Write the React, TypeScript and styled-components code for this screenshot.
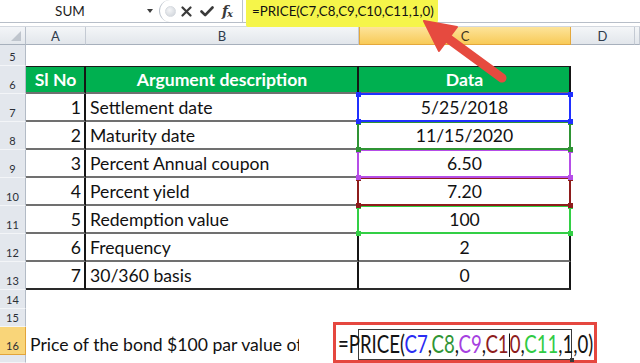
import React from 'react'
import styled, { createGlobalStyle } from 'styled-components'

const GlobalStyle = createGlobalStyle`
  html, body {
    margin: 0;
    padding: 0;
    background: #fff;
  }
  body {
    font-family: Lato, "Open Sans", sans-serif;
  }
`

const Page = styled.div`
  position: relative;
  width: 640px;
  height: 363px;
  overflow: hidden;
  background: #fff;
`

// formula bar
const FormulaBar = styled.div`
  display: flex;
  align-items: stretch;
  height: 22px;
  border-bottom: 1px solid #b7bec8;
  background: #fff;
`

const NameBox = styled.div`
  width: 140px;
  display: flex;
  align-items: center;
  justify-content: center;
  font-size: 13.5px;
  color: #1d1d1d;
`

const DropZone = styled.div`
  width: 19px;
  display: flex;
  align-items: center;
  justify-content: center;
  &::after {
    content: '';
    border-left: 3.5px solid transparent;
    border-right: 3.5px solid transparent;
    border-top: 4px solid #3d3d3d;
  }
`

const ButtonStrip = styled.div`
  width: 84px;
  display: flex;
  align-items: center;
  border-left: 1px solid #bcc3cc;
  border-right: 1px solid #bcc3cc;
  border-radius: 11px 0 0 11px;
  box-sizing: border-box;
`

const Grip = styled.span`
  width: 9px;
  height: 9px;
  margin-left: 5px;
  border-radius: 50%;
  background: radial-gradient(circle at 40% 35%, #f4f5f7, #cdd2d8);
  border: 1px solid #d6dae0;
`

const IconSlot = styled.span<{ $w: number }>`
  width: ${({ $w }) => $w}px;
  display: flex;
  align-items: center;
  justify-content: center;
  color: #3a3a3a;
`

const FxLabel = styled.span`
  font-family: "DejaVu Serif", "Liberation Serif", serif;
  font-style: italic;
  font-weight: bold;
  font-size: 14px;
  color: #3a3a3a;
  letter-spacing: -1px;
  sub {
    font-size: 10px;
    vertical-align: -1px;
  }
`

const FormulaInput = styled.div`
  flex: 1;
  display: flex;
  align-items: flex-start;
  padding-left: 3px;
`

const Highlight = styled.span`
  position: relative;
  z-index: 3;
  height: 27px;
  box-sizing: border-box;
  padding: 3px 4px 0 6px;
  background: #f5f54a;
  border-radius: 0 0 7px 2px;
  font-size: 13.3px;
  line-height: 16px;
  color: #111;
`

const Band = styled.div`
  height: 3px;
  border-bottom: 1px solid #d3d8df;
  background: #fff;
`

// sheet
const Sheet = styled.div`
  display: grid;
  grid-template-columns: 26px 60px 273px 212px 64px 5px;
  grid-template-rows: 18px 21px repeat(8, 28px) 19px 18px 28px 8px;
`

const Corner = styled.div`
  position: relative;
  background: linear-gradient(#f3f5f8, #e3e7ec);
  border-right: 1px solid #b7bfca;
  border-bottom: 1px solid #a7b0bc;
  &::after {
    content: '';
    position: absolute;
    right: 4px;
    bottom: 3px;
    border-left: 10px solid transparent;
    border-bottom: 10px solid #bfc5cd;
  }
`

const ColHead = styled.div<{ $selected?: boolean }>`
  display: flex;
  align-items: center;
  justify-content: center;
  font-size: 13px;
  color: ${({ $selected }) => ($selected ? '#3b3320' : '#2f3b4c')};
  background: ${({ $selected }) =>
    $selected ? 'linear-gradient(#fde49a, #f8ca58)' : 'linear-gradient(#f4f6f8, #e2e6eb)'};
  border-right: 1px solid ${({ $selected }) => ($selected ? '#e4a83c' : '#c4cad3')};
  border-left: ${({ $selected }) => ($selected ? '1px solid #e4a83c' : 'none')};
  border-bottom: 1px solid ${({ $selected }) => ($selected ? '#e4a83c' : '#a7b0bc')};
`

const RowHead = styled.div<{ $selected?: boolean }>`
  display: flex;
  align-items: flex-end;
  justify-content: center;
  padding-bottom: 3px;
  box-sizing: border-box;
  font-size: 11px;
  line-height: 1;
  color: #2b2f36;
  background: ${({ $selected }) => ($selected ? '#f9d579' : '#e3e7ed')};
  border-right: 1px solid ${({ $selected }) => ($selected ? '#e2a43a' : '#b3bbc6')};
  border-bottom: 1px solid ${({ $selected }) => ($selected ? '#e2a43a' : '#f3f5f8')};
`

const Blank = styled.div`
  background: #fff;
`

const Cell = styled.div<{ $align: 'left' | 'right' | 'center'; $head?: boolean; $last?: boolean }>`
  position: relative;
  display: flex;
  align-items: flex-end;
  justify-content: ${({ $align }) =>
    $align === 'left' ? 'flex-start' : $align === 'right' ? 'flex-end' : 'center'};
  padding: 0 3px 3px 4px;
  box-sizing: border-box;
  font-size: 17.6px;
  line-height: 1;
  white-space: nowrap;
  color: ${({ $head }) => ($head ? '#fff' : '#111')};
  font-weight: ${({ $head }) => ($head ? 700 : 400)};
  background: ${({ $head }) => ($head ? '#00b050' : '#fff')};
  border-top: ${({ $head }) => ($head ? '1px solid #1a1a1a' : 'none')};
  border-right: 2px solid #151515;
  border-bottom: 2px solid ${({ $last }) => ($last ? '#2a2a2a' : '#707070')};
`

const RefFrame = styled.span<{ $color: string; $z: number }>`
  position: absolute;
  top: -1px;
  left: -2px;
  right: -2px;
  bottom: -2px;
  border: 2px solid ${({ $color }) => $color};
  z-index: ${({ $z }) => $z};
  pointer-events: none;
`

const Handle = styled.span<{ $color: string; $v: 'top' | 'bottom'; $h: 'left' | 'right' }>`
  position: absolute;
  width: 5px;
  height: 5px;
  background: ${({ $color }) => $color};
  ${({ $v }) => ($v === 'top' ? 'top: -3.5px;' : 'bottom: -3.5px;')}
  ${({ $h }) => ($h === 'left' ? 'left: -3.5px;' : 'right: -3.5px;')}
`

const NoteCell = styled.div`
  grid-column: 2 / 4;
  display: flex;
  align-items: flex-end;
  padding: 0 0 1px 4px;
  overflow: hidden;
`

const NoteText = styled.span`
  display: block;
  max-width: 269px;
  overflow: hidden;
  white-space: nowrap;
  font-size: 17.6px;
  line-height: 1;
  color: #111;
`

// annotations laid over the sheet
const Arrow = styled.svg`
  position: absolute;
  left: 0;
  top: 0;
  z-index: 20;
  pointer-events: none;
`

const Callout = styled.div`
  position: absolute;
  left: 333px;
  top: 322px;
  width: 264px;
  height: 41px;
  box-sizing: border-box;
  border: 3px solid #e5473f;
  background: #fff;
  padding: 12px 0 0 2px;
  z-index: 15;
`

const EditFrame = styled.span`
  position: absolute;
  left: 22px;
  top: 4px;
  width: 214px;
  height: 31px;
  border: 1px solid #3a3a3a;
  box-sizing: border-box;
  &::after {
    content: '';
    position: absolute;
    right: -3px;
    bottom: -3px;
    width: 4px;
    height: 4px;
    background: #3a3a3a;
  }
`

const BigFormula = styled.span`
  position: relative;
  display: inline-block;
  font-size: 18.6px;
  line-height: 1;
  color: #141414;
  white-space: nowrap;
  transform: scaleY(1.3);
  transform-origin: 0 16px;
`

const Ref = styled.span<{ $color: string }>`
  color: ${({ $color }) => $color};
`

const Caret = styled.span`
  display: inline-block;
  width: 0;
  height: 18px;
  vertical-align: -3px;
  border-left: 1.5px solid #111;
`

const rows = [
  { n: 1, label: 'Settlement date', value: '5/25/2018', color: '#2030ff' },
  { n: 2, label: 'Maturity date', value: '11/15/2020', color: '#2f9434' },
  { n: 3, label: 'Percent Annual coupon', value: '6.50', color: '#b64de8' },
  { n: 4, label: 'Percent yield', value: '7.20', color: '#8e1c1c' },
  { n: 5, label: 'Redemption value', value: '100', color: '#33cf45' },
  { n: 6, label: 'Frequency', value: '2', color: '' },
  { n: 7, label: '30/360 basis', value: '0', color: '' },
]

function XIcon() {
  return (
    <svg width="11" height="11" viewBox="0 0 11 11">
      <path d="M1.5 1.5 L9.5 9.5 M9.5 1.5 L1.5 9.5" stroke="#3a3a3a" strokeWidth="2.2" strokeLinecap="round" />
    </svg>
  )
}

function CheckIcon() {
  return (
    <svg width="14" height="11" viewBox="0 0 14 11">
      <path d="M1.5 5.5 L5.2 9.2 L12.5 1.5" stroke="#3a3a3a" strokeWidth="2.6" fill="none" strokeLinecap="round" strokeLinejoin="round" />
    </svg>
  )
}

function EmptyRow({ num }: { num?: number }) {
  return (
    <>
      <RowHead>{num}</RowHead>
      <Blank />
      <Blank />
      <Blank />
      <Blank />
      <Blank />
    </>
  )
}

export default function App() {
  return (
    <Page>
      <GlobalStyle />
      <FormulaBar>
        <NameBox>SUM</NameBox>
        <DropZone />
        <ButtonStrip>
          <Grip />
          <IconSlot $w={21}>
            <XIcon />
          </IconSlot>
          <IconSlot $w={20}>
            <CheckIcon />
          </IconSlot>
          <IconSlot $w={20}>
            <FxLabel>
              f<sub>x</sub>
            </FxLabel>
          </IconSlot>
        </ButtonStrip>
        <FormulaInput>
          <Highlight>=PRICE(C7,C8,C9,C10,C11,1,0)</Highlight>
        </FormulaInput>
      </FormulaBar>
      <Band />

      <Sheet>
        <Corner />
        <ColHead>A</ColHead>
        <ColHead>B</ColHead>
        <ColHead $selected>C</ColHead>
        <ColHead>D</ColHead>
        <ColHead />

        <EmptyRow num={5} />

        <RowHead>6</RowHead>
        <Cell $align="center" $head>Sl No</Cell>
        <Cell $align="center" $head>Argument description</Cell>
        <Cell $align="center" $head>Data</Cell>
        <Blank />
        <Blank />

        {rows.map((r, i) => (
          <React.Fragment key={r.n}>
            <RowHead>{r.n + 6}</RowHead>
            <Cell $align="right" $last={i === rows.length - 1}>{r.n}</Cell>
            <Cell $align="left" $last={i === rows.length - 1}>{r.label}</Cell>
            <Cell $align="center" $last={i === rows.length - 1}>
              {r.value}
              {r.color && (
                <RefFrame $color={r.color} $z={10 - i}>
                  <Handle $color={r.color} $v="top" $h="left" />
                  <Handle $color={r.color} $v="top" $h="right" />
                  <Handle $color={r.color} $v="bottom" $h="left" />
                  <Handle $color={r.color} $v="bottom" $h="right" />
                </RefFrame>
              )}
            </Cell>
            <Blank />
            <Blank />
          </React.Fragment>
        ))}

        <EmptyRow num={14} />
        <EmptyRow num={15} />

        <RowHead $selected>16</RowHead>
        <NoteCell>
          <NoteText>Price of the bond $100 par value of</NoteText>
        </NoteCell>
        <Blank />
        <Blank />
        <Blank />

        <EmptyRow />
      </Sheet>

      <Arrow width="640" height="363" viewBox="0 0 640 363">
        <line x1="446" y1="37" x2="502" y2="78" stroke="#e64a3f" strokeWidth="9" strokeLinecap="round" />
        <polygon points="424,21 457,27 439,51" fill="#e64a3f" stroke="#e64a3f" strokeWidth="2" strokeLinejoin="round" />
      </Arrow>

      <Callout>
        <EditFrame />
        <BigFormula>
          =PRICE(<Ref $color="#2a2cf2">C7</Ref>,<Ref $color="#2f9434">C8</Ref>,
          <Ref $color="#a63fe0">C9</Ref>,<Ref $color="#8e1c1c">C1<Caret />0</Ref>,
          <Ref $color="#2fcb43">C11</Ref>,1,0)
        </BigFormula>
      </Callout>
    </Page>
  )
}
